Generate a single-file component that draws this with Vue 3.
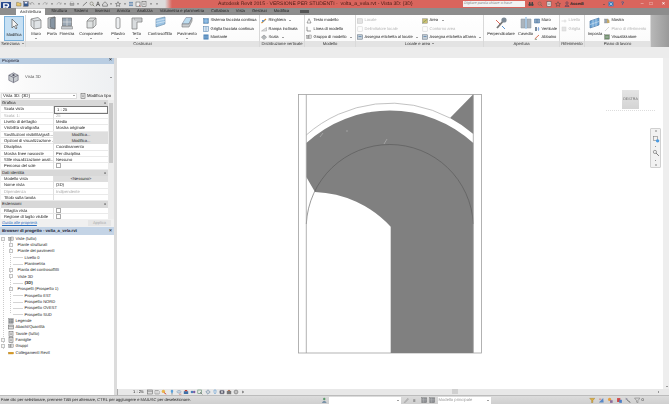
<template>
  <div class="app">
    <header class="titlebar">
      <div class="qat">
        <svg v-for="(q, i) in quick" :key="i" class="qi" viewBox="0 0 6 6" v-html="q" />
      </div>
      <div class="title">Autodesk Revit 2015 - VERSIONE PER STUDENTI -&nbsp; volta_a_vela.rvt - Vista 3D: {3D}</div>
      <div class="title-right">
        <div class="search">Digitare parola chiave o frase</div>
        <svg class="qi" viewBox="0 0 6 6" v-html="icons.binoc" />
        <svg class="qi" viewBox="0 0 6 6" v-html="icons.lens" />
        <svg class="qi" viewBox="0 0 6 6" v-html="icons.sheet" />
        <svg class="qi" viewBox="0 0 6 6" v-html="icons.star" />
        <svg class="qi" viewBox="0 0 6 6" v-html="icons.user" />
        <span class="login">Accedi</span>
        <span class="caret-d login-caret"></span>
        <svg class="qi" viewBox="0 0 6 6" v-html="icons.x" />
        <span class="help">?</span>
        <span class="wbtn">&#8211;</span>
        <span class="wbtn">&#9633;</span>
        <span class="wbtn close">&#215;</span>
      </div>
    </header>
    <div class="logo">R</div>

    <nav class="tabs">
      <span v-for="t in tabs" :key="t" class="tab" :class="{ active: t === 'Architettura' }">{{ t }}</span>
      <span class="tab-more"></span>
    </nav>

    <section class="ribbon">
      <div v-for="p in panels" :key="p.label" class="panel" :style="{ width: p.w + 'px' }">
        <div class="panel-body">
          <template v-for="(c, i) in p.items" :key="i">
            <div v-if="c.big" class="big" :class="{ selected: c.sel }" :style="{ width: c.w + 'px' }">
              <svg class="big-ico" viewBox="0 0 14 14" v-html="icons[c.ico]" />
              <span class="big-label">{{ c.big }}</span>
              <span v-if="c.more" class="caret-d"></span>
            </div>
            <div v-else class="stack" :class="{ inset: c.inset }" :style="{ width: c.w + 'px' }">
              <div v-for="s in c.rows" :key="s.t" class="small" :class="{ off: s.off }">
                <svg class="small-ico" viewBox="0 0 6 6" v-html="icons[s.ico]" />
                <span>{{ s.t }}</span>
                <span v-if="s.more" class="caret-d"></span>
              </div>
            </div>
          </template>
        </div>
        <div class="panel-label">{{ p.label }}<span v-if="p.more" class="caret-d"></span></div>
      </div>
      <div class="ribbon-end"></div>
    </section>

    <div class="optbar"></div>

    <div class="work">
      <aside class="side">
        <section class="props">
          <div class="pane-head"><span>Proprietà</span><b>×</b></div>
          <div class="type-box">
            <svg class="type-ico" viewBox="0 0 14 14" v-html="icons.cube3d" />
            <span>Vista 3D</span>
            <span class="caret-d type-caret"></span>
          </div>
          <div class="type-row">
            <div class="type-select">Vista 3D: {3D}<span class="caret-d"></span></div>
            <svg class="small-ico" viewBox="0 0 6 6" v-html="icons.sheet" />
            <span>Modifica tipo</span>
          </div>
          <div class="table-wrap">
            <div class="table">
              <template v-for="r in propRows" :key="r.n">
                <div v-if="r.group" class="group"><span>{{ r.n }}</span><i>«</i></div>
                <div v-else class="prow" :class="{ dim: r.dim }">
                  <div class="pname">{{ r.n }}</div>
                  <div class="pval" :class="{ boxed: r.boxed, btn: r.btn }">
                    <span v-if="r.check" class="check"></span>
                    <template v-else>{{ r.v }}</template>
                  </div>
                </div>
              </template>
            </div>
            <div class="vscroll"><span class="thumb"></span></div>
          </div>
          <div class="props-foot">
            <span class="help-link">Guida alle proprietà</span>
            <span class="apply">Applica</span>
          </div>
        </section>

        <section class="browser">
          <div class="pane-head"><span class="strong">Browser di progetto - volta_a_vela.rvt</span><b>×</b></div>
          <div class="tree">
            <div v-for="n in tree" :key="n.t" class="node" :class="['lv' + n.l, { bold: n.b }]">
              <span v-if="n.e" class="exp">{{ n.e }}</span>
              <svg v-if="n.ico" class="small-ico" viewBox="0 0 6 6" v-html="icons[n.ico]" />
              <span class="node-t">{{ n.t }}</span>
            </div>
          </div>
        </section>
      </aside>

      <main class="view">
        <div class="canvas-row">
          <div class="canvas">
            <svg class="drawing" viewBox="117 58 546 331" width="546" height="331">
              <rect x="298.5" y="94.5" width="183" height="258.5" fill="#fff" stroke="#a0a0a0" stroke-width=".8" />
              <path fill="#808080" d="M306.3 143 A123.4 123.4 0 0 1 473.3 143 L473.3 353 L390.7 353 L390.7 226.7 A108 108 0 0 0 315 192 L306.3 177 Z" />
              <path fill="#808080" d="M450 118 L473.3 94.3 L473.3 134 A127 127 0 0 0 450 118 Z" />
              <path fill="none" stroke="#a8a8a8" stroke-width=".7" d="M306.3 135 A127 127 0 0 1 450 118" />
              <path fill="none" stroke="#555" stroke-width=".6" d="M306.3 224 A83.6 83.6 0 0 1 473.3 224" />
              <path fill="none" stroke="#a0a0a0" stroke-width=".8" d="M306.3 94.5 V353 M473.3 94.5 V353" />
              <path fill="none" stroke="#c4c4c4" stroke-width=".5" d="M387 139 L384 144 M323 133 L320 137 M347 130 V132" />
            </svg>
            <div class="viewcube">DESTRA</div>
            <div class="cube-ring"></div>
            <div class="navbar">
              <i class="nav-dot"></i>
              <svg class="nav-ico" viewBox="0 0 6 6" v-html="icons.navwheel" />
              <i class="nav-tick"></i>
              <svg class="nav-ico" viewBox="0 0 6 6" v-html="icons.navzoom" />
              <i class="nav-tick"></i>
              <i class="nav-dot"></i>
            </div>
          </div>
          <div class="scroll-v"><span class="caret-d"></span></div>
        </div>
        <div class="viewbar">
          <span class="scale">1 : 25</span>
          <svg v-for="(q, i) in viewIcons" :key="i" class="vi" viewBox="0 0 6 6" v-html="q" />
          <div class="scroll-h"><span class="scroll-thumb"></span><span class="caret-r"></span></div>
        </div>
      </main>
    </div>

    <footer class="status">
      <span class="status-text">Fare clic per selezionare, premere TAB per alternare, CTRL per aggiungere e MAIUSC per deselezionare.</span>
      <svg class="si first" viewBox="0 0 6 6" v-html="icons.workset" />
      <div class="status-input"><span class="caret-d"></span></div>
      <svg class="si" viewBox="0 0 6 6" v-html="icons.pencil" />
      <svg class="si narrow" viewBox="0 0 6 6" v-html="icons.dot" />
      <svg class="si" viewBox="0 0 6 6" v-html="icons.grayBox" />
      <svg class="si" viewBox="0 0 6 6" v-html="icons.grayBox" />
      <div class="status-model">Modello principale<span class="caret-d"></span></div>
      <div class="status-right">
        <svg v-for="(q, i) in statusIcons" :key="i" class="si" viewBox="0 0 6 6" v-html="q" />
        <span class="zero">0</span>
      </div>
    </footer>
  </div>
</template>

<script setup>
const icons = {
  // large ribbon icons, 14 box
  arrow: '<path d="M5 2 L5 11 L7 9 L9 12 L10 11 L8.4 8.4 L11 8 Z" fill="#f4f4f4" stroke="#555" stroke-width=".7"/>',
  wall: '<path d="M2 3 L9 1.5 L12 4 L12 12 L5 13 L2 10 Z" fill="#dfe3e6" stroke="#777" stroke-width=".7"/><path d="M5 5 L12 4 M5 5 V13 M5 5 L2 3" fill="none" stroke="#777" stroke-width=".6"/>',
  door: '<path d="M3 2 L10 1 V13 L3 12 Z" fill="#cfd6dc" stroke="#666" stroke-width=".7"/><path d="M5 3 L10 1 V13 L5 11 Z" fill="#8795a3" stroke="#555" stroke-width=".5"/>',
  window: '<rect x="2.5" y="2" width="9" height="8" fill="#9aa7b4" stroke="#666" stroke-width=".6"/><path d="M7 2 V10 M2.5 6 H11.5" stroke="#e8e8e8" stroke-width=".6"/><path d="M1.5 10.5 H12.5 V13 H1.5 Z" fill="#c8ccd0" stroke="#777" stroke-width=".5"/>',
  comp: '<path d="M3 5 L6 2 H12 V9 L9 12 H3 Z" fill="#dfe2e2" stroke="#777" stroke-width=".7"/><path d="M3 5 H9 V12 M9 5 L12 2" fill="none" stroke="#777" stroke-width=".6"/>',
  column: '<rect x="5" y="1.5" width="4" height="11" rx="1.4" fill="#eceef0" stroke="#777" stroke-width=".7"/>',
  roof: '<path d="M2 2 H12 V6 H7 V13 H2 Z" fill="#d9dcde" stroke="#777" stroke-width=".7"/><path d="M4.5 2 V4 H12" fill="none" stroke="#999" stroke-width=".5"/>',
  ceiling: '<path d="M3 3 L12 1 V8 L3 11 Z" fill="#9cc4e4" stroke="#6a8ba8" stroke-width=".6"/><path d="M3 5 L12 3 M3 7.5 L12 5.5" stroke="#e8f2fa" stroke-width=".6"/>',
  floor: '<path d="M6 1.5 H12 L9 8 H2 Z" fill="#bcdcef" stroke="#778" stroke-width=".5"/><path d="M2 8 H9 L12 2 V5 L9 11 H2 Z" fill="#c9cdd0" stroke="#777" stroke-width=".6"/>',
  perp: '<path d="M3 12 L11 3" stroke="#777" stroke-width="1.8"/><circle cx="10" cy="4" r="2.6" fill="#7d8a96"/><path d="M2 4 L6 8" stroke="#d04030" stroke-width=".8"/><path d="M8 10 L11 13" stroke="#4a8acb" stroke-width=".9"/>',
  shaft: '<path d="M2 3 H6 V12 H2 Z M8 3 H12 V12 H8 Z" fill="#aab4bd" stroke="#8a949d" stroke-width=".5"/><path d="M7 1 V13" stroke="#3a8ad0" stroke-width=".7"/>',
  setwp: '<path d="M2 5 L11 2 V9 L2 12 Z" fill="#6fa6d6" stroke="#3f6f9f" stroke-width=".6"/><path d="M5 4 V11 M8 3 V10 M2 8.5 L11 5.5" stroke="#d8e8f4" stroke-width=".6"/>',
  cube3d: '<path d="M7 2 L12 4.5 V10 L7 12.5 L2 10 V4.5 Z" fill="#c9cdd1" stroke="#667" stroke-width=".7"/><path d="M2 4.5 L7 7 L12 4.5 M7 7 V12.5" fill="none" stroke="#556" stroke-width=".7"/><circle cx="7" cy="4.5" r="1.2" fill="#556"/>',
  // small ribbon icons, 6 box
  curtain: '<rect x=".5" y=".5" width="5" height="5" fill="#6aa3d6" stroke="#4a6a8a" stroke-width=".4"/><path d="M3 .5 V5.5 M.5 3 H5.5" stroke="#dbe9f5" stroke-width=".4"/>',
  grid: '<rect x=".5" y=".5" width="5" height="5" fill="#d5e5f3" stroke="#4a7aa8" stroke-width=".5"/><path d="M3 .5 V5.5" stroke="#4a7aa8" stroke-width=".4"/>',
  mullion: '<rect x=".5" y=".5" width="5" height="5" fill="#3f7ab3"/><path d="M2 .5 V5.5 M4 .5 V5.5 M.5 3 H5.5" stroke="#bcd4ea" stroke-width=".4"/>',
  rail: '<path d="M.5 5 L5 1" stroke="#d08a2a" stroke-width="1.2"/><path d="M1 2 H4 L2 4 H1 Z" fill="#6a9ad0"/>',
  ramp: '<path d="M.5 5 L5.5 1.5 V5 Z" fill="#dfe1e3" stroke="#888" stroke-width=".4"/>',
  stair: '<path d="M.5 3.2 L3 1 L5.5 3.2 L3 5.5 Z" fill="#c8ccd0" stroke="#666" stroke-width=".5"/><path d="M2 3 H4" stroke="#666" stroke-width=".4"/>',
  mtext: '<path d="M3 .7 L5 5 H1 Z" fill="none" stroke="#555" stroke-width=".5"/>',
  mline: '<path d="M1 .8 V5 H5" fill="none" stroke="#555" stroke-width=".6"/>',
  mgroup: '<rect x=".8" y="1.5" width="2.2" height="3" fill="#bbb" stroke="#555" stroke-width=".3"/><rect x="3" y="1" width="2.4" height="3.6" fill="#ddd" stroke="#555" stroke-width=".3"/>',
  room: '<rect x=".5" y=".8" width="5" height="4.4" fill="#e4e4e4" stroke="#bbb" stroke-width=".5"/>',
  roomsep: '<rect x=".8" y=".8" width="4.4" height="4.4" fill="none" stroke="#ccc" stroke-width=".5"/>',
  tag: '<rect x=".5" y=".8" width="5" height="4.4" fill="#c5ced6" stroke="#5a6a7a" stroke-width=".5"/><path d="M1.5 2.5 H4.5" stroke="#4a7aa8" stroke-width=".7"/>',
  area: '<rect x=".5" y=".8" width="5" height="4.4" fill="#cdbf72" stroke="#777" stroke-width=".4"/><path d="M.5 5 L5.5 1" stroke="#7a9a5a" stroke-width=".7"/>',
  wall2: '<path d="M.5 1 H5.5 V5 H.5 Z M3 1 V5" fill="#8aa5c0" stroke="#3f6f9f" stroke-width=".5"/>',
  vert: '<path d="M1 1 H3 V5 H1 Z" fill="#7a8a9a"/><path d="M3.5 3 H5.5 M4.5 1 V5" stroke="#3a7ad0" stroke-width=".5"/>',
  dormer: '<path d="M.7 5 L5 1" stroke="#d05030" stroke-width=".8"/><path d="M1 5.3 H3" stroke="#6a8a6a" stroke-width=".8"/>',
  level: '<path d="M.5 3 H5.5 M4 1.5 V4.5" stroke="#ccc" stroke-width=".6"/>',
  gridoff: '<rect x="1" y="1" width="4" height="4" fill="#e4e4e4" stroke="#ccc" stroke-width=".4"/>',
  show: '<rect x=".6" y="1" width="3.5" height="4" fill="#9aa4ae" stroke="#777" stroke-width=".3"/><path d="M3 .8 L5.4 2.4 V5 H3 Z" fill="#c4a866"/>',
  refplane: '<path d="M1 5 L5 1" stroke="#ccc" stroke-width=".8"/>',
  viewer: '<rect x=".6" y=".8" width="4.8" height="4.4" fill="#6f8f6a" stroke="#555" stroke-width=".3"/><path d="M1.4 3 H4.6" stroke="#dde" stroke-width=".6"/>',
  // title bar
  binoc: '<circle cx="1.7" cy="3.8" r="1.3" fill="#444"/><circle cx="4.3" cy="3.8" r="1.3" fill="#444"/><rect x="1" y="1" width="1.4" height="2" fill="#444"/><rect x="3.6" y="1" width="1.4" height="2" fill="#444"/>',
  lens: '<circle cx="2.6" cy="2.6" r="1.6" fill="none" stroke="#665" stroke-width=".5"/><path d="M3.8 3.8 L5.3 5.3" stroke="#665" stroke-width=".7"/>',
  sheet: '<rect x="1" y=".7" width="4" height="4.6" fill="#e6e6e6" stroke="#555" stroke-width=".5"/><path d="M2 2.2 H4 M2 3.6 H4" stroke="#555" stroke-width=".4"/>',
  star: '<path d="M3 .7 L3.8 2.4 L5.5 2.6 L4.2 3.8 L4.6 5.4 L3 4.5 L1.4 5.4 L1.8 3.8 L.5 2.6 L2.2 2.4 Z" fill="none" stroke="#444" stroke-width=".5"/>',
  user: '<circle cx="3" cy="2" r="1.2" fill="none" stroke="#335" stroke-width=".5"/><path d="M1 5.4 C1 3.6 5 3.6 5 5.4 Z" fill="none" stroke="#335" stroke-width=".5"/>',
  x: '<rect x=".5" y=".7" width="5" height="4.6" fill="#3a7ab8"/><path d="M1.6 1.6 L4.4 4.4 M4.4 1.6 L1.6 4.4" stroke="#e8f0f8" stroke-width=".6"/>',
  // quick access
  open: '<path d="M.6 1.4 H2.4 L3 2 H5 V5 H.6 Z" fill="#e8c770" stroke="#6a5a30" stroke-width=".4"/>',
  save: '<rect x=".8" y=".8" width="4.4" height="4.4" fill="#37588a" stroke="#223" stroke-width=".3"/><rect x="1.7" y="1" width="2.6" height="1.5" fill="#eef"/>',
  undo: '<path d="M1 3 C2 1 4.5 1 5 3.6" fill="none" stroke="#8a8a8a" stroke-width=".7"/><path d="M.6 1.6 L1 3.4 L2.6 3" fill="none" stroke="#8a8a8a" stroke-width=".5"/>',
  redo: '<path d="M5 3 C4 1 1.5 1 1 3.6" fill="none" stroke="#9a9a9a" stroke-width=".7"/><path d="M5.4 1.6 L5 3.4 L3.4 3" fill="none" stroke="#9a9a9a" stroke-width=".5"/>',
  printer: '<rect x="1" y="2.2" width="4" height="2.2" fill="#aaa" stroke="#666" stroke-width=".3"/><rect x="1.8" y="1" width="2.4" height="1.2" fill="#eee" stroke="#888" stroke-width=".3"/>',
  caret: '<path d="M2 2.6 H4 L3 3.8 Z" fill="#444"/>',
  ruler: '<path d="M.8 4.8 L5 1" stroke="#666" stroke-width=".8"/>',
  text: '<path d="M1.2 5.2 L3 .8 L4.8 5.2 M2 3.6 H4" fill="none" stroke="#333" stroke-width=".6"/>',
  house: '<path d="M.6 3 L3 .8 L5.4 3 V5.2 H.6 Z" fill="#d8d8d8" stroke="#444" stroke-width=".5"/>',
  layers: '<path d="M1 1.4 H5 M1 3 H5 M1 4.6 H5" stroke="#3a6aa0" stroke-width=".7"/>',
  bag: '<rect x="1" y="1" width="4" height="4.2" fill="#eee" stroke="#555" stroke-width=".5"/><path d="M4 4 L5.6 5.6" stroke="#c44" stroke-width=".6"/>',
  // view and status bars
  v1: '<rect x=".7" y="1" width="4.6" height="4" fill="#ddd" stroke="#555" stroke-width=".5"/><path d="M.7 2.4 H5.3" stroke="#555" stroke-width=".4"/>',
  v2: '<path d="M1 5 V1.5 H4.4 L5.2 2.5 V5 Z" fill="#eee" stroke="#555" stroke-width=".4"/><path d="M3 1.5 V5" stroke="#555" stroke-width=".3"/>',
  v3: '<circle cx="2.4" cy="2.4" r="1.7" fill="#eab64a"/><path d="M3 3.6 L5.2 5.2" stroke="#d0402a" stroke-width=".9"/>',
  v4: '<path d="M3 .7 C1.6 .7 1.4 2.6 2.2 3.2 V4.2 H3.8 V3.2 C4.6 2.6 4.4 .7 3 .7 Z" fill="#5aa0d8"/><rect x="2.2" y="4.6" width="1.6" height=".7" fill="#777"/>',
  v5: '<path d="M.7 2.8 C2 1 4 1 5.3 2.8 C4 4.6 2 4.6 .7 2.8 Z" fill="#c9d7e4" stroke="#5a7a9a" stroke-width=".4"/><path d="M3 5.2 H5.4" stroke="#d04030" stroke-width=".5"/>',
  v6: '<rect x=".8" y="2.2" width="4.4" height="2.8" fill="#3f6fa8"/><path d="M2 1 H4 L4.4 2.2 H1.6 Z" fill="#c04030"/>',
  v7: '<circle cx="2" cy="3" r="1.3" fill="#4a7fb8"/><circle cx="4.2" cy="3" r="1.2" fill="#7a5aa0"/>',
  v8: '<rect x=".8" y="1" width="3.6" height="3.6" fill="none" stroke="#5a8a6a" stroke-width=".6"/><path d="M3 3 L5.4 5.4" stroke="#555" stroke-width=".6"/>',
  v9: '<path d="M3 .8 L5.2 3 L3 5.2 L.8 3 Z" fill="none" stroke="#5a7a9a" stroke-width=".6"/><path d="M1.8 3 H4.2" stroke="#5a7a9a" stroke-width=".4"/>',
  v10: '<path d="M2 1 H4 V3.2 L3 5 L2 3.2 Z" fill="none" stroke="#4a90d0" stroke-width=".5"/>',
  v11: '<rect x=".8" y="1.4" width="4.4" height="3.4" rx=".7" fill="#667" stroke="#445" stroke-width=".3"/><circle cx="3" cy="3" r=".9" fill="#ddd"/>',
  v12: '<rect x=".8" y="2" width="4.4" height="3.2" fill="#777"/><path d="M1.4 2 L3 .8 L4.6 2" fill="#b05a3a"/>',
  v13: '<circle cx="3" cy="3" r="2" fill="#aaa" stroke="#666" stroke-width=".4"/><circle cx="3" cy="3" r=".7" fill="#eee"/>',
  vmore: '<path d="M2.4 1.6 L4 3 L2.4 4.4 Z" fill="#555"/>',
  workset: '<circle cx="3" cy="1.9" r="1.1" fill="#5a9a6a"/><path d="M.9 5.4 C1 3.4 5 3.4 5.1 5.4 Z" fill="#5f7f9a"/>',
  pencil: '<path d="M1 5 L4.4 1.2 L5.2 2 L1.8 5.4 Z" fill="#bbb" stroke="#888" stroke-width=".3"/>',
  dot: '<rect x="2" y="2" width="2" height="2.6" fill="#999"/>',
  grayBox: '<rect x=".7" y=".7" width="4.6" height="4.6" fill="#8d9094" stroke="#666" stroke-width=".3"/><path d="M2.4 .7 V5.3 M.7 2.6 H5.3" stroke="#ccc" stroke-width=".3"/>',
  s1: '<path d="M.6 1.2 H5.4 L3.6 3.2 V5 L2.4 5.4 V3.2 Z" fill="#e0b040" stroke="#8a6a20" stroke-width=".3"/>',
  s2: '<path d="M.8 5 L4.8 1 L5.2 5 Z" fill="#5a8ac8"/><path d="M1 2 H3" stroke="#d04030" stroke-width=".5"/>',
  s3: '<circle cx="2.4" cy="2.2" r="1.5" fill="#e8a040"/><rect x="2.8" y="3" width="2.4" height="2.4" fill="#8a6a9a"/>',
  s4: '<rect x="1" y="1" width="3" height="3.6" fill="#d04848"/><rect x="3" y="2.6" width="2.4" height="2.8" fill="#4a80c8"/>',
  s5: '<path d="M.8 1.4 L3 3.6 M3 3.6 L5 5.2" stroke="#666" stroke-width=".9"/><circle cx="1.4" cy="1.8" r=".9" fill="#99a"/>',
  s6: '<path d="M.5 1 H5.5 L3.6 3.4 V5.4 L2.4 4.8 V3.4 Z" fill="none" stroke="#777" stroke-width=".5"/>',
  navwheel: '<rect x="1" y="1" width="3.2" height="3.2" fill="none" stroke="#777" stroke-width=".4"/><circle cx="4.2" cy="4.4" r="1.3" fill="#4a9ae0"/>',
  navzoom: '<circle cx="2.2" cy="2.2" r="1.2" fill="none" stroke="#777" stroke-width=".5"/><path d="M3 3 L5.2 5.2" stroke="#777" stroke-width=".7"/>',
  link: '<rect x=".5" y="2.2" width="5" height="1.8" fill="#e0a020" stroke="#a06a10" stroke-width=".3"/>'
}

const quick = [
  icons.open, icons.save, icons.undo, icons.caret, icons.redo, icons.caret, icons.redo, icons.caret,
  icons.printer, icons.caret, icons.ruler, icons.lens, icons.text, icons.house, icons.caret,
  icons.star, icons.caret, icons.layers, icons.bag, icons.sheet, icons.caret, icons.caret
]
const viewIcons = [
  icons.v1, icons.v2, icons.v3, icons.v4, icons.v5, icons.v6, icons.v7,
  icons.v8, icons.v9, icons.v10, icons.v11, icons.v12, icons.v13, icons.vmore
]
const statusIcons = [icons.s1, icons.s2, icons.s3, icons.s4, icons.s5, icons.s6]

const tabs = ['Architettura', 'Struttura', 'Sistemi', 'Inserisci', 'Annota', 'Analizza',
  'Volumetria e planimetria', 'Collabora', 'Vista', 'Gestisci', 'Modifica']

const panels = [
  { label: 'Seleziona', more: true, w: 26, items: [
    { big: 'Modifica', ico: 'arrow', w: 20, sel: true }
  ] },
  { label: 'Costruisci', w: 234, items: [
    { big: 'Muro', ico: 'wall', w: 18, more: true },
    { big: 'Porta', ico: 'door', w: 14 },
    { big: 'Finestra', ico: 'window', w: 16 },
    { big: 'Componente', ico: 'comp', w: 32, more: true },
    { big: 'Pilastro', ico: 'column', w: 22, more: true },
    { big: 'Tetto', ico: 'roof', w: 15, more: true },
    { big: 'Controsoffitto', ico: 'ceiling', w: 32 },
    { big: 'Pavimento', ico: 'floor', w: 22, more: true },
    { w: 62, inset: true, rows: [
      { t: 'Sistema facciata continua', ico: 'curtain' },
      { t: 'Griglia facciata continua', ico: 'grid' },
      { t: 'Montante', ico: 'mullion' }
    ] }
  ] },
  { label: 'Distribuzione verticale', w: 45, items: [
    { w: 44, rows: [
      { t: 'Ringhiera', ico: 'rail', more: true },
      { t: 'Rampa inclinata', ico: 'ramp' },
      { t: 'Scala', ico: 'stair', more: true }
    ] }
  ] },
  { label: 'Modello', w: 51, items: [
    { w: 50, rows: [
      { t: 'Testo modello', ico: 'mtext' },
      { t: 'Linea di modello', ico: 'mline' },
      { t: 'Gruppo di modello', ico: 'mgroup', more: true }
    ] }
  ] },
  { label: 'Locale e area', more: true, w: 128, items: [
    { w: 65, rows: [
      { t: 'Locale', ico: 'room', off: true },
      { t: 'Delimitatore locale', ico: 'roomsep', off: true },
      { t: 'Assegna etichetta al locale', ico: 'tag', more: true }
    ] },
    { w: 62, rows: [
      { t: 'Area', ico: 'area', more: true },
      { t: 'Contorno area', ico: 'roomsep', off: true },
      { t: "Assegna etichetta all'area", ico: 'tag', more: true }
    ] }
  ] },
  { label: 'Apertura', w: 76, items: [
    { big: 'Perpendicolare', ico: 'perp', w: 32 },
    { big: 'Cavedio', ico: 'shaft', w: 17 },
    { w: 26, rows: [
      { t: 'Muro', ico: 'wall2' },
      { t: 'Verticale', ico: 'vert' },
      { t: 'Abbaino', ico: 'dormer' }
    ] }
  ] },
  { label: 'Riferimento', w: 25, items: [
    { w: 24, rows: [
      { t: 'Livello', ico: 'level', off: true },
      { t: 'Griglia', ico: 'gridoff', off: true }
    ] }
  ] },
  { label: 'Piano di lavoro', w: 66, items: [
    { big: 'Imposta', ico: 'setwp', w: 18 },
    { w: 47, rows: [
      { t: 'Mostra', ico: 'show' },
      { t: 'Piano di riferimento', ico: 'refplane', off: true },
      { t: 'Visualizzatore', ico: 'viewer' }
    ] }
  ] }
]

const propRows = [
  { n: 'Grafica', group: true },
  { n: 'Scala vista', v: '1 : 25', boxed: true },
  { n: 'Scala: 1:', v: '25', dim: true },
  { n: 'Livello di dettaglio', v: 'Medio' },
  { n: 'Visibilità stratigrafia', v: 'Mostra originale' },
  { n: 'Sostituzioni visibilità/grafi...', v: 'Modifica...', btn: true },
  { n: 'Opzioni di visualizzazione ...', v: 'Modifica...', btn: true },
  { n: 'Disciplina', v: 'Coordinamento' },
  { n: 'Mostra linee nascoste', v: 'Per disciplina' },
  { n: 'Stile visualizzazione anali...', v: 'Nessuno' },
  { n: 'Percorso del sole', check: true },
  { n: 'Dati identità', group: true },
  { n: 'Modello vista', v: '<Nessuno>', btn: true },
  { n: 'Nome vista', v: '{3D}' },
  { n: 'Dipendenza', v: 'Indipendente', dim: true },
  { n: 'Titolo sulla tavola', v: '' },
  { n: 'Estensioni', group: true },
  { n: 'Ritaglia vista', check: true },
  { n: 'Regione di taglio visibile', check: true }
]

const tree = [
  { t: 'Viste (tutto)', l: 0, e: '−', ico: 'mgroup', b: false },
  { t: 'Piante strutturali', l: 1, e: '+' },
  { t: 'Piante dei pavimenti', l: 1, e: '−' },
  { t: 'Livello 0', l: 2 },
  { t: 'Planimetria', l: 2 },
  { t: 'Pianta dei controsoffitti', l: 1, e: '+' },
  { t: 'Viste 3D', l: 1, e: '−' },
  { t: '{3D}', l: 2, b: true },
  { t: 'Prospetti (Prospetto 1)', l: 1, e: '−' },
  { t: 'Prospetto EST', l: 2 },
  { t: 'Prospetto NORD', l: 2 },
  { t: 'Prospetto OVEST', l: 2 },
  { t: 'Prospetto SUD', l: 2 },
  { t: 'Legende', l: 0, ico: 'grayBox' },
  { t: 'Abachi/Quantità', l: 0, ico: 'v1' },
  { t: 'Tavole (tutto)', l: 0, ico: 'sheet' },
  { t: 'Famiglie', l: 0, e: '+', ico: 'sheet' },
  { t: 'Gruppi', l: 0, e: '+', ico: 'mgroup' },
  { t: 'Collegamenti Revit', l: 0, ico: 'link' }
]
</script>

<style scoped>
.app {
  position: relative;
  width: 669px;
  height: 404px;
  overflow: hidden;
  display: flex;
  flex-direction: column;
  background: #e4e4e4;
  font-family: "Liberation Sans", Arial, sans-serif;
  font-size: 5px;
  line-height: 1;
  color: #222;
  text-rendering: geometricPrecision;
}
.app > *:not(.work) { filter: blur(.25px); }

/* title bar */
.titlebar {
  height: 8px;
  flex: none;
  display: flex;
  align-items: center;
  background: linear-gradient(90deg, #dcdcdc 0, #dcdcdc 165px, #d9655d 172px, #d9655d 100%);
}
.qat { width: 170px; flex: none; display: flex; padding-left: 16px; box-sizing: border-box; gap: .6px; }
.qi { width: 6px; height: 6px; flex: none; }
.title { position: absolute; left: 218px; top: 1.5px; font-size: 5.1px; color: #4a1c16; white-space: nowrap; }
.title-right { margin-left: 293px; display: flex; align-items: center; gap: 3px; }
.search { width: 62px; height: 6.5px; background: #f2f2f2; font-size: 3.7px; color: #888; padding: 1px 0 0 1px; box-sizing: border-box; font-style: italic; }
.login { font-size: 4.2px; color: #222; font-weight: 700; width: 28px; margin-left: -3px; }
.login-caret { margin: 0; }
.help { font-size: 5px; margin: 0 13.5px 0 4px; color: #2d5a94; font-weight: 700; }
.wbtn { width: 9px; margin-left: -3px; text-align: center; color: #f8e8e6; font-size: 5px; }
.close { width: 16px; color: #fff; font-weight: 700; }
.logo {
  position: absolute; left: 1px; top: 2px; width: 10px; height: 12px;
  background: linear-gradient(180deg, #2a4d92, #1b3570);
  color: #fff; font-weight: 700; font-size: 10px; line-height: 12px; text-align: center;
}

/* tabs */
.tabs {
  height: 7px; flex: none; display: flex; align-items: center; gap: 7px;
  padding-left: 19px; background: #8d8d8d; color: #222; font-size: 4.15px; white-space: nowrap;
}
.tab { position: relative; }
.tab.active { color: #2a2a2a; background: #fff; padding: 1px 4px; margin: 0 -1px 0 -3px; height: 7px; box-sizing: border-box; border-top: 1px solid #c8c8c8; }
.tab-more { width: 9px; height: 3px; background: #555; margin-left: 4px; }

/* ribbon */
.ribbon { height: 32px; flex: none; display: flex; background: #fff; }
.panel { flex: none; display: flex; flex-direction: column; border-right: 1px solid #d9d9d9; box-sizing: border-box; }
.panel-body { height: 26px; display: flex; flex: none; padding-left: 1px; background: linear-gradient(#fff, #fbfbfb); }
.panel-label { height: 6px; background: #e3e3e3; font-size: 4.2px; line-height: 6px; text-align: center; color: #333; white-space: nowrap; overflow: hidden; }
.big { flex: none; display: flex; flex-direction: column; align-items: center; position: relative; padding-top: 1px; box-sizing: border-box; }
.big.selected { margin: 1px 0 0 3px; height: 25px; background: #c6e0f4; border: 1px solid #7ab0da; padding-top: 0; }
.big-ico { width: 14px; height: 14px; flex: none; }
.big-label { font-size: 4.1px; margin-top: 1.5px; white-space: nowrap; }
.big .caret-d { margin: 2px 0 0; }
.stack { flex: none; display: flex; flex-direction: column; gap: 2.4px; padding-top: 2.5px; box-sizing: border-box; }
.stack.inset { padding-left: 5px; }
.small { display: flex; align-items: center; gap: 1.5px; font-size: 4.05px; white-space: nowrap; height: 6px; }
.small.off { color: #b5b5b5; }
.small-ico { width: 6px; height: 6px; flex: none; }
.caret-d { display: inline-block; width: 0; height: 0; border: 1.2px solid transparent; border-top: 1.6px solid #444; border-bottom: 0; margin-left: 2px; flex: none; vertical-align: middle; }
.ribbon-end { flex: 1; background: linear-gradient(90deg, #b8b8b8, #9a9a9a); }
.optbar { height: 11px; flex: none; background: #ececec; }

/* work area */
.work { height: 337px; flex: none; display: flex; }
.side { width: 117px; flex: none; display: flex; flex-direction: column; background: #dcdcdc; padding-right: 3px; box-sizing: border-box; color: #222; filter: blur(.25px); }

.pane-head {
  height: 5.5px; flex: none; display: flex; align-items: center; justify-content: space-between;
  padding: 0 2px; background: #b9cde2; font-size: 4.2px; color: #223;
}
.pane-head b { font-size: 5px; color: #333; }
.strong { font-weight: 700; }
.props { height: 169px; flex: none; display: flex; flex-direction: column; background: #dbe4ee; }
.type-box {
  height: 28px; flex: none; display: flex; align-items: center; gap: 5px; padding-left: 7px;
  background: linear-gradient(90deg, #fff, #fafafa 25px, #eef0f2); font-size: 4.2px; color: #555;
}
.type-ico { width: 13px; height: 13px; flex: none; }
.type-caret { margin-left: auto; margin-right: 2px; }
.type-row { height: 8.5px; flex: none; display: flex; align-items: center; gap: 1.5px; padding-left: 1px; background: #f2f2f2; font-size: 4.3px; white-space: nowrap; }
.type-select { width: 76px; height: 6px; background: #fff; display: flex; justify-content: space-between; align-items: center; padding: 0 1px; box-sizing: border-box; border: 1px solid #ddd; margin-right: 1px; }
.table-wrap { flex: 1; display: flex; min-height: 0; background: #f4f4f4; padding-left: 1px; }
.table { width: 107px; flex: none; display: grid; grid-auto-rows: 6.33px; align-content: start; background: #fff; }
.group { display: flex; align-items: center; justify-content: space-between; padding: 0 2px 0 1px; background: #d8d8d8; font-size: 4.2px; }
.group i { font-style: normal; transform: rotate(90deg); font-size: 4px; }
.prow { display: grid; grid-template-columns: 53px 54px; font-size: 4.1px; border-bottom: 1px solid #eaeaea; box-sizing: border-box; }
.prow.dim { color: #a8a8a8; }
.pname { padding-left: 3px; white-space: nowrap; overflow: hidden; border-right: 1px solid #e0e0e0; line-height: 6px; }
.pval { padding-left: 2px; line-height: 6px; white-space: nowrap; display: flex; align-items: center; }
.pval.boxed { border: 1px solid #777; box-sizing: border-box; }
.pval.btn { justify-content: center; background: #dedede; padding: 0; }
.check { width: 5px; height: 5px; border: 1px solid #aaa; background: #fff; display: block; box-sizing: border-box; }
.vscroll { flex: 1; background: #ececec; position: relative; padding: 3px 1px 0; }
.thumb { display: block; height: 60px; background: #c9c9c9; }
.props-foot { height: 8.5px; flex: none; display: flex; align-items: center; justify-content: space-between; padding: 0 2px; background: #f0f0f0; font-size: 4px; }
.help-link { color: #2a6fc0; text-decoration: underline; }
.apply { width: 23px; height: 6.5px; line-height: 6.5px; text-align: center; background: #e6e6e6; color: #aaa; margin-right: 1px; }

.browser { flex: 1; display: flex; flex-direction: column; background: #fff; min-height: 0; }
.browser .pane-head { height: 8px; background: #c4d4e6; }
.tree { position: relative; display: grid; grid-auto-rows: 6.33px; padding-top: .5px; font-size: 4.1px; }
.tree::before { content: ""; position: absolute; left: 3px; top: 2px; height: 112px; border-left: 1px dotted #ccc; }
.tree::after { content: ""; position: absolute; left: 10px; top: 6px; height: 72px; border-left: 1px dotted #ccc; }
.node { display: flex; align-items: center; gap: 1px; white-space: nowrap; position: relative; z-index: 1; }
.lv0 { padding-left: 8px; }
.lv1 { padding-left: 17px; }
.lv2 { padding-left: 24px; }
.lv2::before { content: ""; position: absolute; left: 13px; width: 10px; top: 3px; border-top: 1px solid #d4d4d4; }
.bold { font-weight: 700; }
.exp {
  position: absolute; width: 4px; height: 4px; box-sizing: border-box; border: 1px solid #c4c4c4; background: #fff;
  font-size: 3px; line-height: 2px; text-align: center; top: 1px; color: #777; overflow: hidden;
}
.lv0 .exp { left: 1px; }
.lv1 .exp { left: 8.5px; }
.node-t { margin-left: .5px; }

/* drawing area */
.view { flex: 1; display: flex; flex-direction: column; min-width: 0; }
.canvas-row { flex: 1; display: flex; min-height: 0; }
.canvas { position: relative; width: 546px; flex: none; background: #fff; }
.drawing { display: block; }
.viewcube {
  position: absolute; left: 505px; top: 32px; width: 17px; height: 19px; box-sizing: border-box;
  background: linear-gradient(#e4e4e4, #d4d4d4); font-size: 3.6px; line-height: 19px; text-align: center; color: #666; filter: blur(.25px);
}
.cube-ring { position: absolute; left: 489px; top: 52px; width: 49px; border-top: 1px dotted #ddd; }
.navbar {
  position: absolute; left: 533px; top: 70px; width: 11px; height: 40px; box-sizing: border-box;
  display: flex; flex-direction: column; align-items: center; justify-content: space-between; padding: 1px 0;
  background: #f2f2f2; border: 1px solid #d0d0d0; border-radius: 1px; filter: blur(.2px);
}
.nav-ico { width: 8px; height: 8px; }
.nav-dot { width: 2px; height: 2px; background: #aaa; border-radius: 50%; }
.nav-tick { width: 1.5px; height: 1px; background: #999; }
.scroll-v { flex: 1; background: #eeeeee; display: flex; align-items: flex-end; justify-content: center; padding-bottom: 2px; }
.viewbar { height: 6px; flex: none; display: flex; align-items: center; background: #e8e8e8; padding-left: 15px; font-size: 4.2px; filter: blur(.2px); border-left: 1px solid #aaa; box-sizing: border-box; }
.scale { width: 14px; flex: none; }
.vi { width: 6px; height: 6px; flex: none; margin-right: 1.2px; }
.scroll-h { flex: 1; position: relative; height: 100%; margin-left: 2px; }
.scroll-thumb { position: absolute; left: 202px; top: 0; width: 6px; height: 5px; background: #d0d0d0; }
.caret-r { position: absolute; right: 10px; top: 1.5px; border: 1.3px solid transparent; border-left: 1.7px solid #444; border-right: 0; }

/* status */
.status { height: 9px; flex: none; display: flex; align-items: center; background: linear-gradient(#dcdcdc, #cfcfcf); border-top: 1px solid #bcbcbc; box-sizing: border-box; font-size: 4.05px; position: relative; }
.status-text { width: 320px; padding-left: 1px; box-sizing: border-box; flex: none; white-space: nowrap; color: #222; }
.si { width: 6.5px; height: 6.5px; flex: none; margin-right: 1.5px; }
.si.first { margin-left: 1px; }
.si.narrow { margin-right: 3px; }
.status-input { width: 72px; height: 7px; background: #fff; flex: none; display: flex; justify-content: flex-end; align-items: center; padding-right: 2px; box-sizing: border-box; margin: 0 2px 0 0; }
.status-model { width: 53px; height: 7px; background: #fff; flex: none; display: flex; align-items: center; justify-content: space-between; padding: 0 2px 0 1px; box-sizing: border-box; color: #999; font-size: 4.2px; margin-left: 1px; }
.status-right { margin-left: 98px; display: flex; align-items: center; gap: 1px; }
.zero { font-size: 4px; margin-left: -1px; }
</style>
